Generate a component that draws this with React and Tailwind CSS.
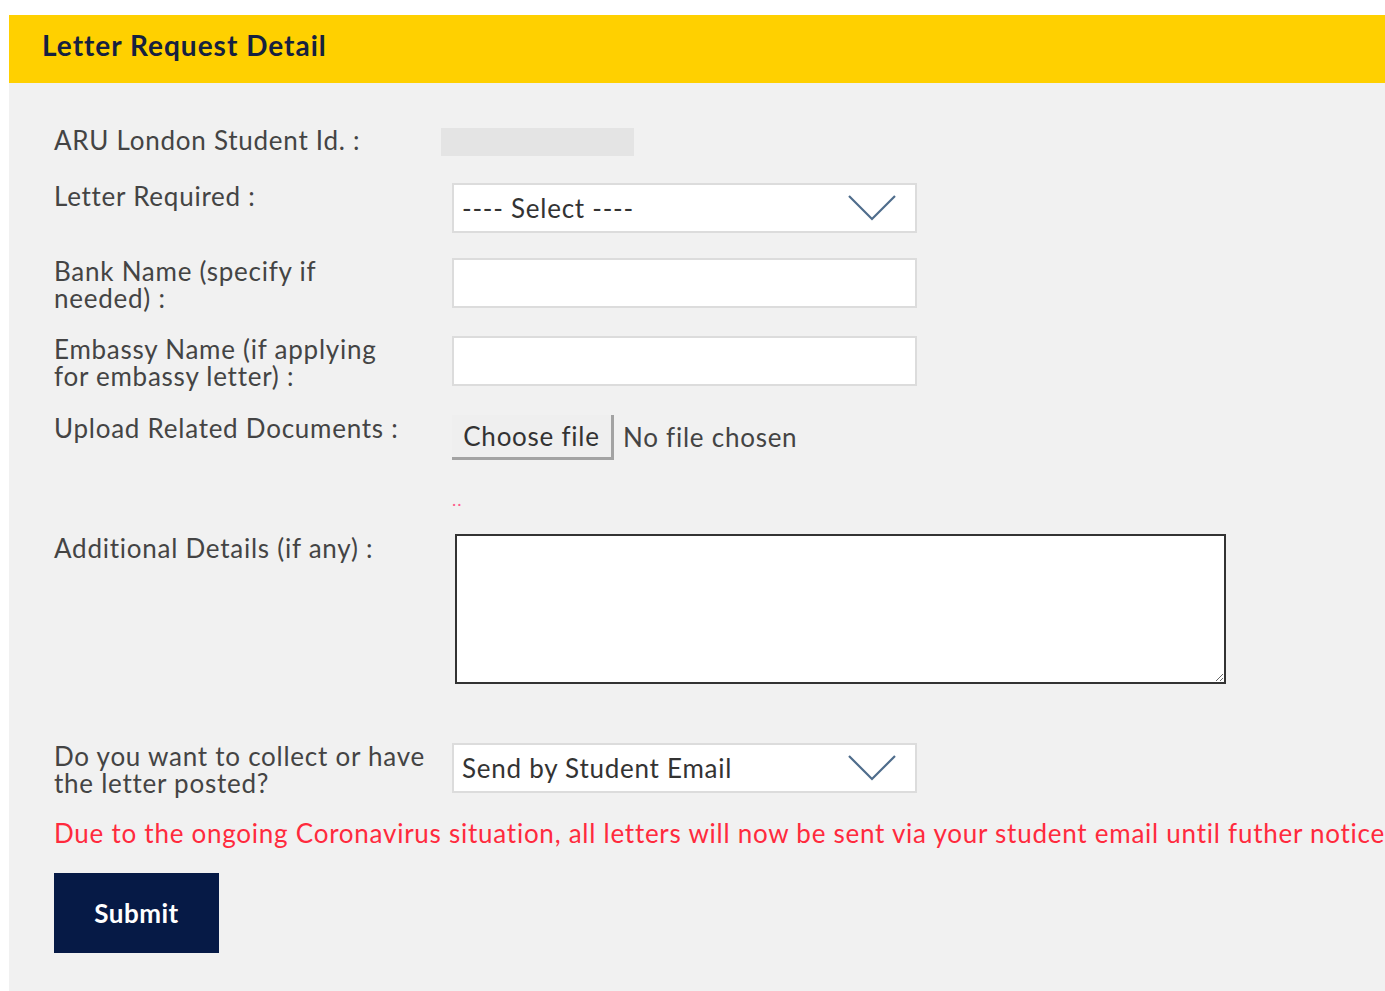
import React, { useState } from "react";

const Chevron = () => (
  <svg width="48" height="26" viewBox="0 0 48 26" fill="none" className="shrink-0">
    <path d="M1 1 L24 24 L47 1" stroke="#4f6d8c" strokeWidth="2.2" />
  </svg>
);

const SelectBox = ({ value }) => (
  <div className="w-[465px] h-[50px] bg-white border-2 border-[#dcdcdc] flex items-center justify-between pl-[8px] pr-[19px]">
    <span className="text-[26px] text-[#333] tracking-[0.75px]">{value}</span>
    <Chevron />
  </div>
);

const TextBox = () => (
  <input type="text" className="w-[465px] h-[50px] bg-white border-2 border-[#dcdcdc] outline-none" />
);

const Label = ({ children, className = "" }) => (
  <div className={`shrink-0 text-[26px] leading-[27px] tracking-[0.75px] text-[#444] ${className}`}>{children}</div>
);

const LetterRequest = () => {
  const [details, setDetails] = useState("");

  return (
    <div className="min-h-[991px] bg-white pt-[15px] pl-[9px]" style={{ fontFamily: '"Lato", "Open Sans", sans-serif' }}>
      {/* Header */}
      <div className="h-[68px] bg-[#ffd000] flex items-center pl-[33px] pb-[9px]">
        <h2 className="text-[28px] font-bold text-[#16213f] tracking-[1px]">Letter Request Detail</h2>
      </div>

      {/* Form body */}
      <div className="bg-[#f1f1f1] min-h-[908px] pl-[45px] pt-[44px]">
        <div className="flex items-center h-[30px]">
          <Label className="w-[387px] -mt-[4px]">ARU London Student Id. :</Label>
          <div className="w-[193px] h-[28px] bg-[#e4e4e4]" />
        </div>

        <div className="flex mt-[26px]">
          <Label className="w-[398px]">Letter Required :</Label>
          <SelectBox value="---- Select ----" />
        </div>

        <div className="flex mt-[25px]">
          <Label className="w-[398px]">
            Bank Name (specify if
            <br />
            needed) :
          </Label>
          <TextBox />
        </div>

        <div className="flex mt-[24px]">
          <Label className="w-[398px]">
            Embassy Name (if applying
            <br />
            for embassy letter) :
          </Label>
          <TextBox />
        </div>

        <div className="flex mt-[25px]">
          <Label className="w-[398px]">Upload Related Documents :</Label>
          <div className="flex items-center">
            <button className="h-[45px] w-[162px] bg-[#efefef] border-r-[3px] border-b-[3px] border-[#a3a3a3] text-[26px] text-[#333] tracking-[0.75px]">
              Choose file
            </button>
            <span className="ml-[9px] text-[26px] text-[#444] tracking-[0.75px]">No file chosen</span>
          </div>
        </div>

        {/* validation message slot */}
        <div className="pl-[398px] mt-[30px] h-[22px] text-[#ff5a8a] text-[18px] leading-[18px] tracking-[1px]">..</div>

        <div className="flex mt-[22px]">
          <Label className="w-[398px] pt-[1px]">Additional Details (if any) :</Label>
          <textarea
            value={details}
            onChange={(e) => setDetails(e.target.value)}
            className="ml-[3px] w-[771px] h-[150px] bg-white border-2 border-[#333] outline-none resize"
          />
        </div>

        <div className="flex mt-[59px]">
          <Label className="w-[398px]">
            Do you want to collect or have
            <br />
            the letter posted?
          </Label>
          <SelectBox value="Send by Student Email" />
        </div>

        <p className="mt-[21px] text-[26px] leading-[30px] tracking-[0.75px] text-[#ff2a3d] whitespace-nowrap">
          Due to the ongoing Coronavirus situation, all letters will now be sent via your student email until futher notice
        </p>

        <button className="mt-[25px] w-[165px] h-[80px] bg-[#061a46] text-white text-[26px] font-bold tracking-[0.5px]">Submit</button>
      </div>
    </div>
  );
};

export default function App() {
  return <LetterRequest />;
}
